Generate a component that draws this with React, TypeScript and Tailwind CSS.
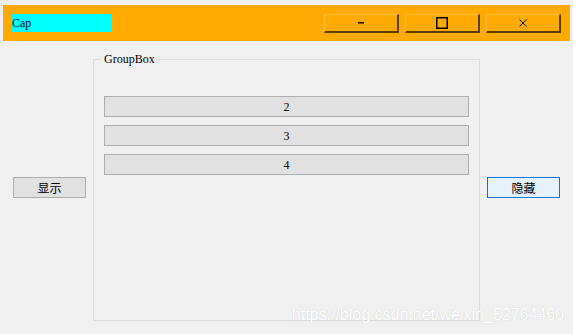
import React from "react";

const serif = { fontFamily: '"Liberation Serif", "Noto Sans CJK SC", serif' };

function WinButton({ children }: { children: React.ReactNode }) {
  return (
    <button className="w-[75px] h-[19px] flex items-center justify-center bg-[#ffaa00] border-t border-l border-[#ffbf3a] border-b-2 border-r-2 border-b-[#5c3d00] border-r-[#5c3d00]">
      {children}
    </button>
  );
}

export default function App() {
  const rows = ["2", "3", "4"];
  return (
    <div className="relative w-[573px] h-[334px] bg-[#f0f0f0] overflow-hidden pt-[5px] px-[3px]" style={serif}>
      {/* title bar */}
      <div className="h-[36px] bg-[#ffaa00] flex items-center pl-[9px] pr-[9px]">
        <div className="w-[99px] h-[18px] bg-[#00ffff] flex items-center text-[12px] text-black leading-none">Cap</div>
        <div className="flex-1" />
        <div className="flex gap-[6px]">
          <WinButton>
            <svg width="8" height="2" viewBox="0 0 8 2"><rect x="1" y="0" width="6" height="1.5" fill="#000" /></svg>
          </WinButton>
          <WinButton>
            <svg width="12" height="12" viewBox="0 0 12 12"><rect x="0.75" y="0.75" width="10.5" height="10.5" fill="none" stroke="#000" strokeWidth="1.5" /></svg>
          </WinButton>
          <WinButton>
            <svg width="8" height="8" viewBox="0 0 8 8"><path d="M0.5 0.5 L7.5 7.5 M7.5 0.5 L0.5 7.5" stroke="#000" strokeWidth="1" /></svg>
          </WinButton>
        </div>
      </div>

      {/* body */}
      <div className="h-[293px] -mx-[3px] flex items-center pl-[13px] gap-[7px]">
        <button
          className="w-[73px] h-[21px] bg-[#e1e1e1] border border-[#adadad] text-[12px] text-black leading-none"
          style={{ fontFamily: '"Noto Sans CJK SC", sans-serif' }}
        >
          显示
        </button>

        <fieldset className="self-start mt-[11px] w-[387px] h-[269px] border border-[#dcdcdc] px-[10px] pb-[10px]">
          <legend className="ml-[-3px] px-[3px] text-[12px] leading-[14px] text-black">GroupBox</legend>
          <div className="flex flex-col gap-[8px] mt-[30px]">
            {rows.map((r) => (
              <div
                key={r}
                className="h-[21px] bg-[#e1e1e1] border border-[#adadad] flex items-center justify-center text-[12px] text-black"
              >
                {r}
              </div>
            ))}
          </div>
        </fieldset>

        <button
          className="w-[73px] h-[21px] bg-[#e5f1fb] border border-[#0078d7] text-[12px] text-black leading-none"
          style={{ fontFamily: '"Noto Sans CJK SC", sans-serif' }}
        >
          隐藏
        </button>
      </div>

      {/* watermark */}
      <div
        className="absolute right-[9px] bottom-[11px] text-[16px] leading-none text-white"
        style={{ fontFamily: '"Liberation Sans", sans-serif', textShadow: "0 0 1px #c8c8c8" }}
      >
        https://blog.csdn.net/weixin_52764460
      </div>
    </div>
  );
}
